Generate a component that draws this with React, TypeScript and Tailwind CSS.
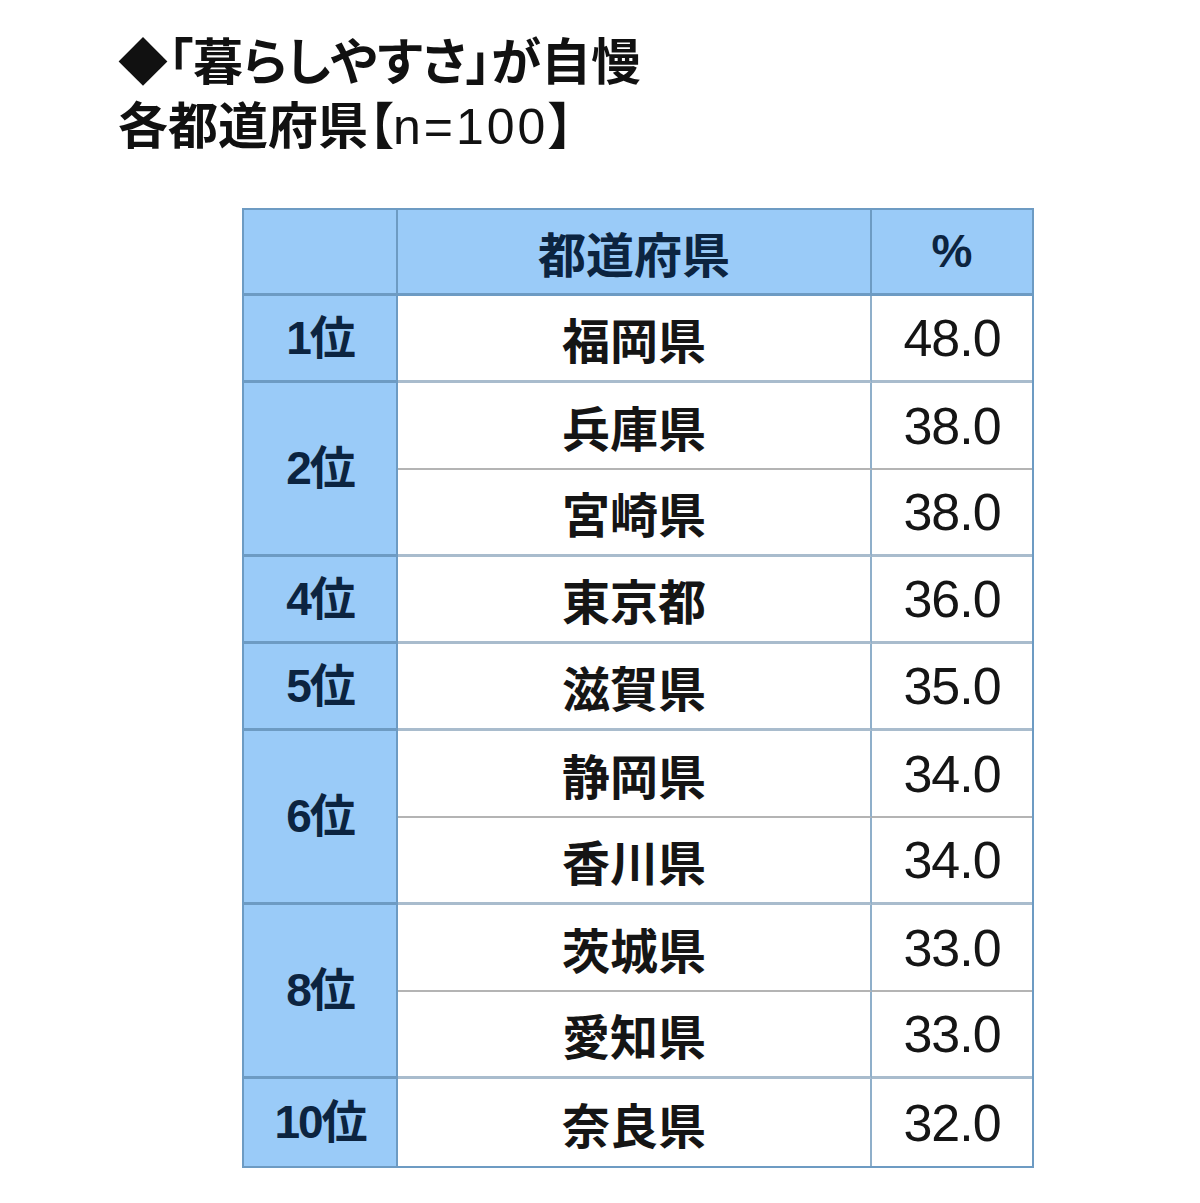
import React from "react";

type Row = { name: string; pct: string };
type Group = { rank: string; rows: Row[] };

const groups: Group[] = [
  { rank: "1位", rows: [{ name: "福岡県", pct: "48.0" }] },
  {
    rank: "2位",
    rows: [
      { name: "兵庫県", pct: "38.0" },
      { name: "宮崎県", pct: "38.0" },
    ],
  },
  { rank: "4位", rows: [{ name: "東京都", pct: "36.0" }] },
  { rank: "5位", rows: [{ name: "滋賀県", pct: "35.0" }] },
  {
    rank: "6位",
    rows: [
      { name: "静岡県", pct: "34.0" },
      { name: "香川県", pct: "34.0" },
    ],
  },
  {
    rank: "8位",
    rows: [
      { name: "茨城県", pct: "33.0" },
      { name: "愛知県", pct: "33.0" },
    ],
  },
  { rank: "10位", rows: [{ name: "奈良県", pct: "32.0" }] },
];

const jp = "font-['Noto_Sans_CJK_JP',sans-serif]";
const num = "font-['Liberation_Sans','Noto_Sans_CJK_JP',sans-serif]";

export default function App() {
  return (
    <div className="w-[1200px] h-[1203px] bg-white overflow-hidden">
      {/* Title */}
      <div
        className={`pl-[118px] pt-[26px] ${jp} font-bold text-[50px] leading-[64px] text-[#111] [font-feature-settings:'palt']`}
      >
        <div>◆「暮らしやすさ」が自慢</div>
        <div>
          各都道府県【<span className={`${num} font-normal tracking-[3px]`}>n=100</span>】
        </div>
      </div>

      {/* Table */}
      <div className="ml-[242px] mt-[49px] w-[792px] border-2 border-[#6d9bc3] grid grid-cols-[154px_474px_160px]">
        {/* Header */}
        <div className="h-[86px] bg-[#9acbf8] border-r-2 border-b-[3px] border-[#6d9bc3]" />
        <div
          className={`h-[86px] bg-[#9acbf8] border-r-2 border-b-[3px] border-[#6d9bc3] flex items-center justify-center ${jp} font-bold text-[48px] text-[#0c2440]`}
        >
          都道府県
        </div>
        <div
          className={`h-[86px] bg-[#9acbf8] border-b-[3px] border-[#6d9bc3] flex items-center justify-center ${num} font-bold text-[46px] text-[#0c2440]`}
        >
          %
        </div>

        {groups.map((g, gi) => {
          const lastGroup = gi === groups.length - 1;
          return (
            <React.Fragment key={g.rank}>
              <div
                className={`${g.rows.length === 2 ? "row-span-2" : "row-span-1"} bg-[#9acbf8] border-r-2 border-[#6d9bc3] ${
                  lastGroup ? "" : "border-b-[3px]"
                } flex items-center justify-center ${num} font-bold text-[46px] tracking-[-2px] text-[#0c2440]`}
              >
                {g.rank}
              </div>
              {g.rows.map((r, ri) => {
                const lastInGroup = ri === g.rows.length - 1;
                const bottom = lastGroup && lastInGroup
                  ? ""
                  : lastInGroup
                  ? "border-b-[3px] border-b-[#a9bccd]"
                  : "border-b-2 border-b-[#b4b4b4]";
                return (
                  <React.Fragment key={r.name}>
                    <div
                      className={`h-[87px] bg-white border-r-2 border-r-[#8fafca] ${bottom} flex items-center justify-center ${jp} font-bold text-[48px] text-[#151515]`}
                    >
                      {r.name}
                    </div>
                    <div
                      className={`h-[87px] bg-white ${bottom} flex items-center justify-center ${num} text-[52px] tracking-[-1px] text-[#151515]`}
                    >
                      {r.pct}
                    </div>
                  </React.Fragment>
                );
              })}
            </React.Fragment>
          );
        })}
      </div>
    </div>
  );
}
